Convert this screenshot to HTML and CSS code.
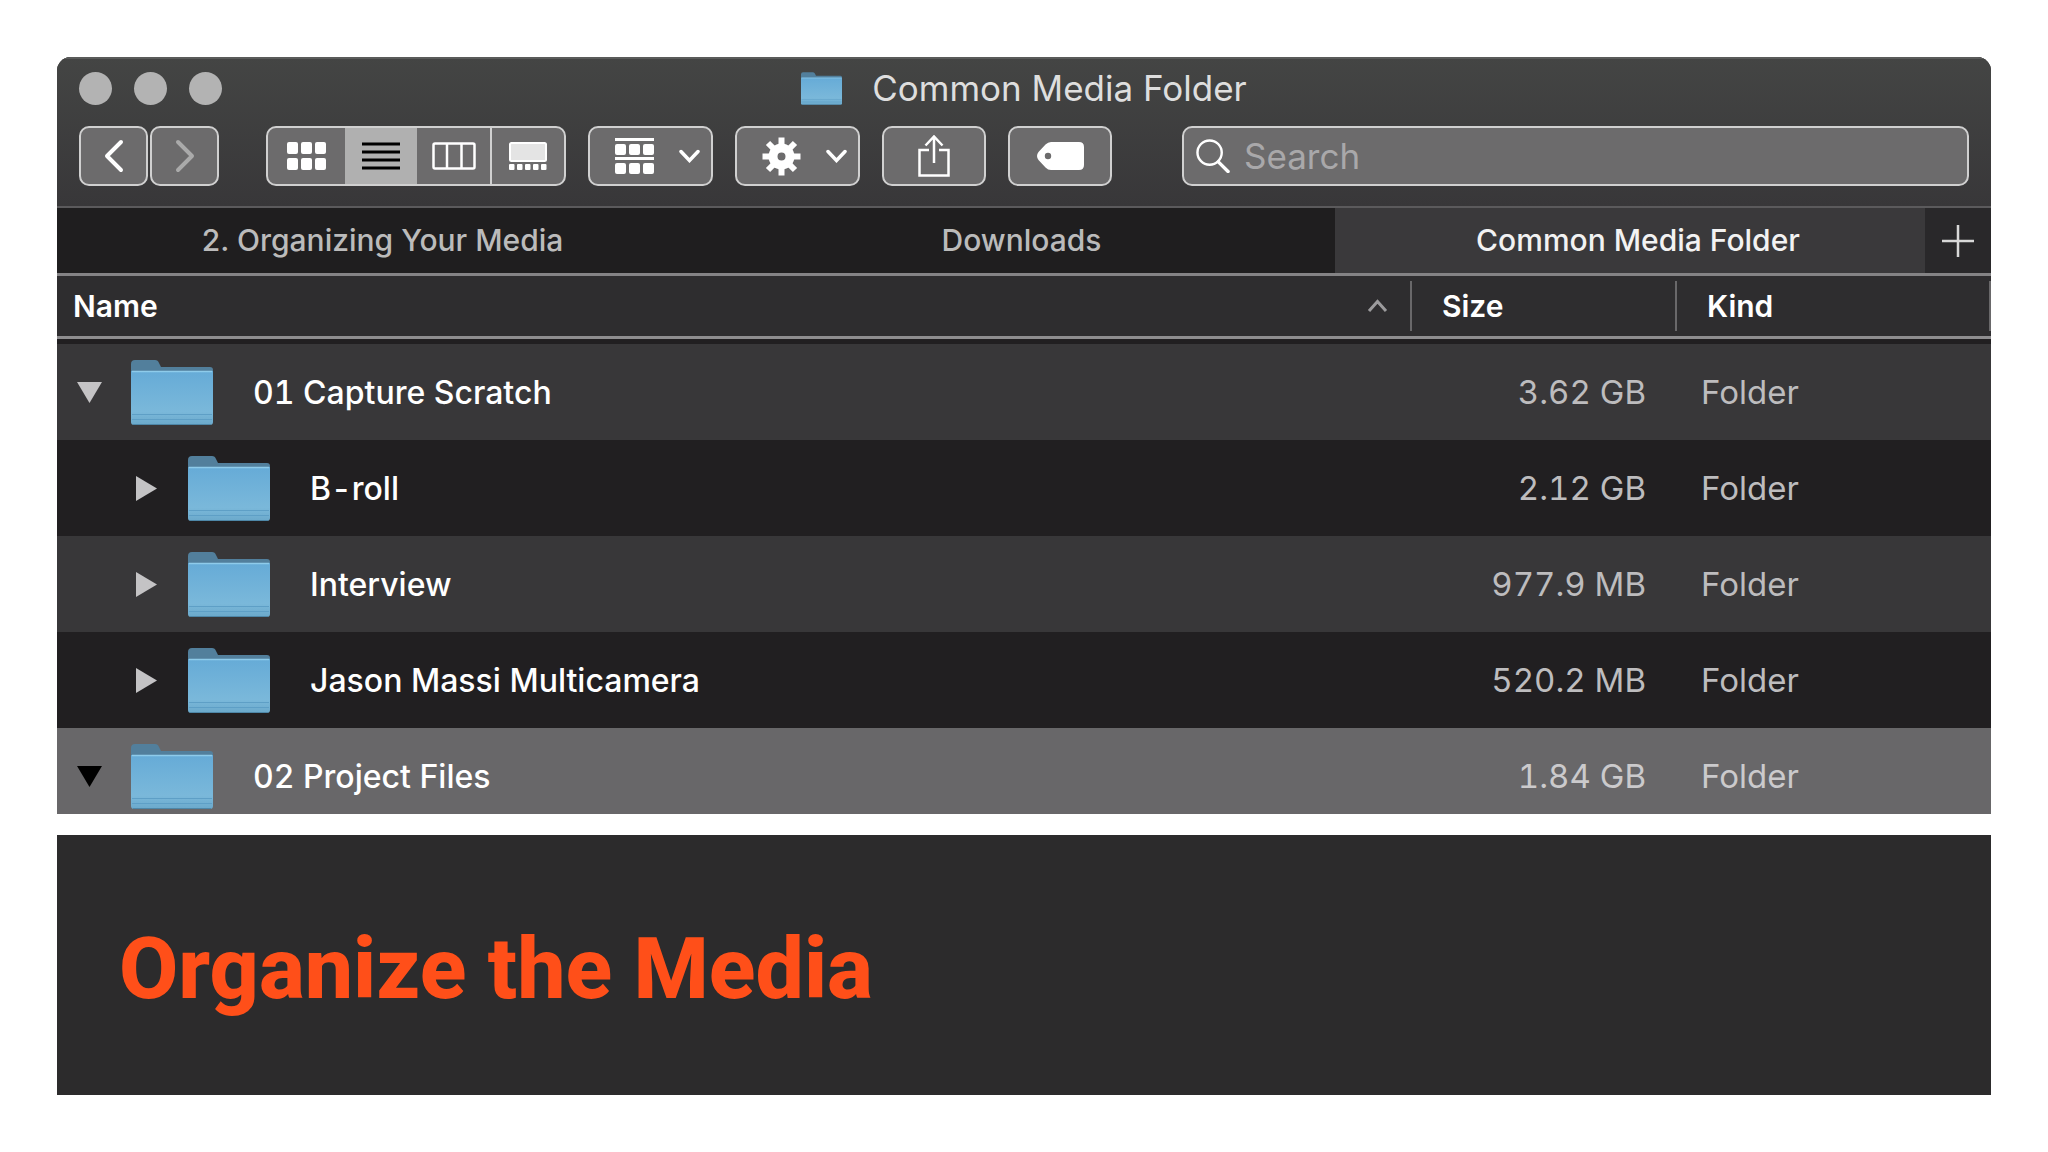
FILE: index.html
```html
<!DOCTYPE html>
<html lang="en">
<head>
    <meta charset="utf-8">
    <title>Organize the Media</title>
    <link rel="stylesheet" href="styles.css">
</head>
<body>
    <!-- shared shapes -->
    <svg class="defs" width="0" height="0" aria-hidden="true">
        <defs>
            <linearGradient id="folder-front" x1="0" y1="0" x2="0" y2="1">
                <stop offset="0" stop-color="#66abd7"/>
                <stop offset=".75" stop-color="#7ab8da"/>
                <stop offset="1" stop-color="#6ba9cb"/>
            </linearGradient>
            <symbol id="folder" viewBox="0 0 82 65">
                <path d="M0 4Q0 0 4 0H24Q27 0 28 3L30 7H79Q82 7 82 10V30H0Z" fill="#527f9c"/>
                <path d="M0 11H82V62Q82 65 79 65H3Q0 65 0 62Z" fill="url(#folder-front)"/>
                <path d="M1 11.5H81" stroke="#8ecbea" stroke-width="1.5"/>
                <path d="M1 54.5H81M1 59.5H81" stroke="#5e9fc6" stroke-width="1"/>
                <path d="M2 64.5H80" stroke="#4e87a8" stroke-width="1"/>
            </symbol>
            <symbol id="chevron" viewBox="0 0 21 14">
                <path d="M2 2.500L10.500 11.500L19 2.500" fill="none" stroke="#fff" stroke-width="3.500" stroke-linecap="round"/>
            </symbol>
            <symbol id="closed" viewBox="0 0 25 25">
                <path d="M2 0L23 12.500L2 25Z" fill="currentColor"/>
            </symbol>
            <symbol id="open" viewBox="0 0 25 25">
                <path d="M0 2H25L12.500 23Z" fill="currentColor"/>
            </symbol>
        </defs>
    </svg>

    <main>
        <section class="window">
            <header class="chrome">
                <div class="titlebar">
                    <div class="lights">
                        <button class="light" aria-label="Close"></button>
                        <button class="light" aria-label="Minimize"></button>
                        <button class="light" aria-label="Zoom"></button>
                    </div>
                    <div class="title">
                        <svg class="title-folder" width="41" height="33"><use href="#folder"/></svg>
                        <span>Common Media Folder</span>
                    </div>
                </div>

                <div class="toolbar">
                    <div class="nav">
                        <button class="btn nav-btn" aria-label="Back">
                            <svg width="20" height="34" viewBox="0 0 20 34"><path d="M17 3L3 17L17 31" fill="none" stroke="#fff" stroke-width="4" stroke-linecap="round" stroke-linejoin="round"/></svg>
                        </button>
                        <button class="btn nav-btn" aria-label="Forward">
                            <svg width="20" height="34" viewBox="0 0 20 34"><path d="M3 3L17 17L3 31" fill="none" stroke="#aaa" stroke-width="4" stroke-linecap="round" stroke-linejoin="round"/></svg>
                        </button>
                    </div>

                    <div class="views">
                        <button class="view view-icons" aria-label="Icons">
                            <svg width="39" height="28" viewBox="0 0 39 28" fill="#fff">
                                <rect width="11" height="12" rx="2"/><rect x="14" width="11" height="12" rx="2"/><rect x="28" width="11" height="12" rx="2"/>
                                <rect y="16" width="11" height="12" rx="2"/><rect x="14" y="16" width="11" height="12" rx="2"/><rect x="28" y="16" width="11" height="12" rx="2"/>
                            </svg>
                        </button>
                        <button class="view selected" aria-label="List">
                            <svg width="38" height="28" viewBox="0 0 38 28"><path d="M0 2H38M0 10H38M0 18H38M0 26H38" stroke="#000" stroke-width="3"/></svg>
                        </button>
                        <button class="view" aria-label="Columns">
                            <svg width="44" height="28" viewBox="0 0 44 28"><rect x="1.500" y="1.500" width="41" height="25" rx="1.500" fill="none" stroke="#fff" stroke-width="2.500"/><path d="M15 1V27M29.500 1V27" stroke="#fff" stroke-width="2.500"/></svg>
                        </button>
                        <button class="view divided" aria-label="Gallery">
                            <svg width="38" height="28" viewBox="0 0 38 28" fill="#fff">
                                <rect x="1" y="1" width="36" height="18" rx="1.500" fill="#e4e4e4" stroke="#fff" stroke-width="2"/>
                                <rect y="22" width="5.500" height="6" rx="1"/><rect x="8" y="22" width="5.500" height="6" rx="1"/><rect x="16" y="22" width="5.500" height="6" rx="1"/><rect x="24" y="22" width="5.500" height="6" rx="1"/><rect x="32" y="22" width="5.500" height="6" rx="1"/>
                            </svg>
                        </button>
                    </div>

                    <button class="btn menu-btn" aria-label="Group by">
                        <svg width="39" height="36" viewBox="0 0 39 36" fill="#fff">
                            <rect width="39" height="3"/>
                            <rect y="6" width="11" height="11" rx="2"/><rect x="14" y="6" width="11" height="11" rx="2"/><rect x="28" y="6" width="11" height="11" rx="2"/>
                            <rect y="19" width="39" height="3"/>
                            <rect y="25" width="11" height="11" rx="2"/><rect x="14" y="25" width="11" height="11" rx="2"/><rect x="28" y="25" width="11" height="11" rx="2"/>
                        </svg>
                        <svg width="21" height="14"><use href="#chevron"/></svg>
                    </button>

                    <button class="btn menu-btn" aria-label="Actions">
                        <svg width="39" height="39" viewBox="-19.500 -19.500 39 39">
                            <g stroke="#fff" stroke-width="6">
                                <path d="M0 -19V-10M0 19V10M-19 0H-10M19 0H10"/>
                                <path d="M-13.500 -13.500L-7 -7M13.500 13.500L7 7M-13.500 13.500L-7 7M13.500 -13.500L7 -7"/>
                            </g>
                            <circle r="8.500" fill="none" stroke="#fff" stroke-width="9"/>
                        </svg>
                        <svg width="21" height="14"><use href="#chevron"/></svg>
                    </button>

                    <button class="btn wide-btn" aria-label="Share">
                        <svg width="32" height="42" viewBox="0 0 32 42"><path d="M11 15H1.500V40.500H30.500V15H21M16 28V2M7.500 10.500L16 1.500L24.500 10.500" fill="none" stroke="#fff" stroke-width="2.500"/></svg>
                    </button>

                    <button class="btn wide-btn" aria-label="Tags">
                        <svg width="47" height="28" viewBox="0 0 47 28"><path fill="#fff" fill-rule="evenodd" d="M14 0H42Q47 0 47 5V23Q47 28 42 28H14Q11 28 8.500 25.500L1.500 18Q-1.500 14 1.500 10L8.500 2.500Q11 0 14 0ZM11 10.800A3.200 3.200 0 1 0 11 17.200A3.200 3.200 0 1 0 11 10.800Z"/></svg>
                    </button>

                    <label class="search">
                        <svg width="34" height="34" viewBox="0 0 35 35"><circle cx="14" cy="14" r="12.500" fill="none" stroke="#fff" stroke-width="2.500"/><path d="M23 23.500L33 33.500" stroke="#fff" stroke-width="3.500" stroke-linecap="round"/></svg>
                        <input type="search" placeholder="Search" aria-label="Search">
                    </label>
                </div>
            </header>

            <nav class="tabs">
                <a href="#" class="tab">2. Organizing Your Media</a>
                <a href="#" class="tab">Downloads</a>
                <a href="#" class="tab active">Common Media Folder</a>
                <button class="add-tab" aria-label="New tab">
                    <svg width="32" height="32" viewBox="0 0 32 32"><path d="M16 0V32M0 16H32" stroke="#d8d8d8" stroke-width="2.500"/></svg>
                </button>
            </nav>

            <table class="files">
                <thead>
                    <tr>
                        <th class="col-name">
                            <div class="head">Name
                                <svg width="21" height="14" viewBox="0 0 21 14"><path d="M2 12L10.500 2.500L19 12" fill="none" stroke="#9c9b9d" stroke-width="3"/></svg>
                            </div>
                        </th>
                        <th class="col-size"><div class="head">Size</div></th>
                        <th class="col-kind"><div class="head">Kind</div></th>
                    </tr>
                </thead>
                <tbody>
                    <tr>
                        <td>
                            <div class="name">
                                <button class="toggle" aria-label="Collapse 01 Capture Scratch"><svg width="25" height="25"><use href="#open"/></svg></button>
                                <svg class="folder" width="82" height="65"><use href="#folder"/></svg>
                                <span>01 Capture Scratch</span>
                            </div>
                        </td>
                        <td class="size">3.62 GB</td>
                        <td class="kind">Folder</td>
                    </tr>
                    <tr>
                        <td>
                            <div class="name child">
                                <button class="toggle" aria-label="Expand B-roll"><svg width="25" height="25"><use href="#closed"/></svg></button>
                                <svg class="folder" width="82" height="65"><use href="#folder"/></svg>
                                <span>B-roll</span>
                            </div>
                        </td>
                        <td class="size">2.12 GB</td>
                        <td class="kind">Folder</td>
                    </tr>
                    <tr>
                        <td>
                            <div class="name child">
                                <button class="toggle" aria-label="Expand Interview"><svg width="25" height="25"><use href="#closed"/></svg></button>
                                <svg class="folder" width="82" height="65"><use href="#folder"/></svg>
                                <span>Interview</span>
                            </div>
                        </td>
                        <td class="size">977.9 MB</td>
                        <td class="kind">Folder</td>
                    </tr>
                    <tr>
                        <td>
                            <div class="name child">
                                <button class="toggle" aria-label="Expand Jason Massi Multicamera"><svg width="25" height="25"><use href="#closed"/></svg></button>
                                <svg class="folder" width="82" height="65"><use href="#folder"/></svg>
                                <span>Jason Massi Multicamera</span>
                            </div>
                        </td>
                        <td class="size">520.2 MB</td>
                        <td class="kind">Folder</td>
                    </tr>
                    <tr class="current">
                        <td>
                            <div class="name">
                                <button class="toggle" aria-label="Collapse 02 Project Files"><svg width="25" height="25"><use href="#open"/></svg></button>
                                <svg class="folder" width="82" height="65"><use href="#folder"/></svg>
                                <span>02 Project Files</span>
                            </div>
                        </td>
                        <td class="size">1.84 GB</td>
                        <td class="kind">Folder</td>
                    </tr>
                </tbody>
            </table>
        </section>

        <section class="caption">
            <h1>Organize the Media</h1>
        </section>
    </main>
</body>
</html>
```
FILE: styles.css
```css
* {
    box-sizing: border-box;
}

body {
    margin: 0;
    padding: 57px;
    background: #fff;
    font-family: Inter, "Liberation Sans", sans-serif;
}

button {
    padding: 0;
    border: 0;
    background: none;
    font: inherit;
}

svg {
    display: block;
    flex: none;
}

.defs {
    position: absolute;
}

.window {
    overflow: hidden;
    border-radius: 14px 14px 0 0;
    background: #211f21;
    color: #fff;
}

/* title bar and toolbar */
.chrome {
    background: linear-gradient(#444544, #383739);
    border-bottom: 2px solid #5b5a5c;
    box-shadow: inset 0 2px 0 #5a5b5a;
}

.titlebar {
    display: grid;
    grid-template-columns: 1fr auto 1fr;
    align-items: center;
    height: 62px;
    padding: 0 22px;
}

.lights {
    display: flex;
    gap: 22px;
}

.light {
    width: 33px;
    height: 33px;
    border-radius: 50%;
    background: #b3b3b3;
}

.title {
    display: flex;
    align-items: center;
    gap: 30px;
    font-size: 35px;
    line-height: 40px;
    color: #dedede;
}

.toolbar {
    display: flex;
    gap: 22px;
    padding: 7px 22px 20px;
}

.nav {
    display: flex;
    gap: 2px;
    margin-right: 25px;
}

.btn,
.views,
.search {
    display: flex;
    align-items: center;
    height: 60px;
    border: 2px solid #d0d0d0;
    border-radius: 10px;
    background: #6c6b6c;
}

.nav-btn {
    justify-content: center;
    width: 69px;
}

.views {
    width: 300px;
    overflow: hidden;
}

.view {
    display: flex;
    flex: 73;
    align-items: center;
    justify-content: center;
    height: 100%;
}

.view-icons {
    flex: 78;
}

.view.selected {
    background: #b0b0b0;
}

.view.divided {
    border-left: 2px solid #d0d0d0;
}

.menu-btn {
    justify-content: space-between;
    width: 125px;
    padding: 0 11px 0 25px;
}

.wide-btn {
    justify-content: center;
    width: 104px;
}

.search {
    flex: 1;
    gap: 14px;
    margin-left: 48px;
    padding: 0 12px;
}

.search input {
    flex: 1;
    min-width: 0;
    padding: 0;
    border: 0;
    outline: 0;
    background: none;
    font: inherit;
    font-size: 35px;
    color: #fff;
}

.search input::placeholder {
    color: #a9a8aa;
}

/* tabs */
.tabs {
    display: flex;
    border-bottom: 3px solid #848385;
}

.tab {
    flex: 651;
    height: 65px;
    background: #1f1e1f;
    color: #bbb;
    font-size: 30px;
    font-weight: 500;
    line-height: 65px;
    text-align: center;
    text-decoration: none;
}

.tab + .tab {
    flex: 627;
}

.tab + .tab.active {
    flex: 574;
    padding-left: 16px;
    background: #3a393b;
    color: #f2f2f2;
}

.add-tab {
    display: flex;
    align-items: center;
    justify-content: center;
    width: 66px;
    background: #29282a;
}

/* file list, the last row runs under the window edge */
.files {
    width: 100%;
    margin-bottom: -10px;
    border-spacing: 0;
    table-layout: fixed;
    font-size: 33px;
    font-variant-numeric: tabular-nums;
}

.files th {
    padding: 5px 0;
    border-bottom: 3px solid #8e8d8f;
    background: #2e2d2f;
    font-size: 30px;
    font-weight: 600;
    text-align: left;
}

.head {
    display: flex;
    align-items: center;
    justify-content: space-between;
    height: 50px;
    padding: 0 22px 0 16px;
}

.col-size {
    width: 265px;
}

.col-kind {
    width: 316px;
}

.col-size .head,
.col-kind .head {
    padding-left: 30px;
    border-left: 2px solid #69686a;
}

.col-kind .head {
    border-right: 2px solid #69686a;
}

.files td {
    padding: 0;
    background: #211f21;
    color: #bdbcbe;
}

.files tbody tr:nth-child(odd) td {
    background: #383739;
}

.files tbody tr:first-child td {
    border-top: 5px solid #211f21;
}

.files tbody tr.current td {
    background: #686769;
    color: #cbcacc;
}

.name {
    display: flex;
    align-items: center;
    height: 96px;
    padding-left: 20px;
    color: #fff;
    font-size: 32px;
    font-weight: 500;
}

.name.child {
    padding-left: 77px;
}

.toggle {
    color: #c4c3c5;
}

.current .toggle {
    color: #000;
}

.folder {
    margin: 0 40px 0 29px;
}

.files .size {
    padding-right: 29px;
    text-align: right;
}

.files .kind {
    padding-left: 26px;
}

/* caption */
.caption {
    margin-top: 21px;
    padding: 84px 62px 76px;
    background: #2c2b2c;
}

.caption h1 {
    margin: 0;
    font-family: Roboto, "Liberation Sans", sans-serif;
    font-size: 86px;
    font-weight: 800;
    line-height: 100px;
    color: #ff4f19;
}
```
